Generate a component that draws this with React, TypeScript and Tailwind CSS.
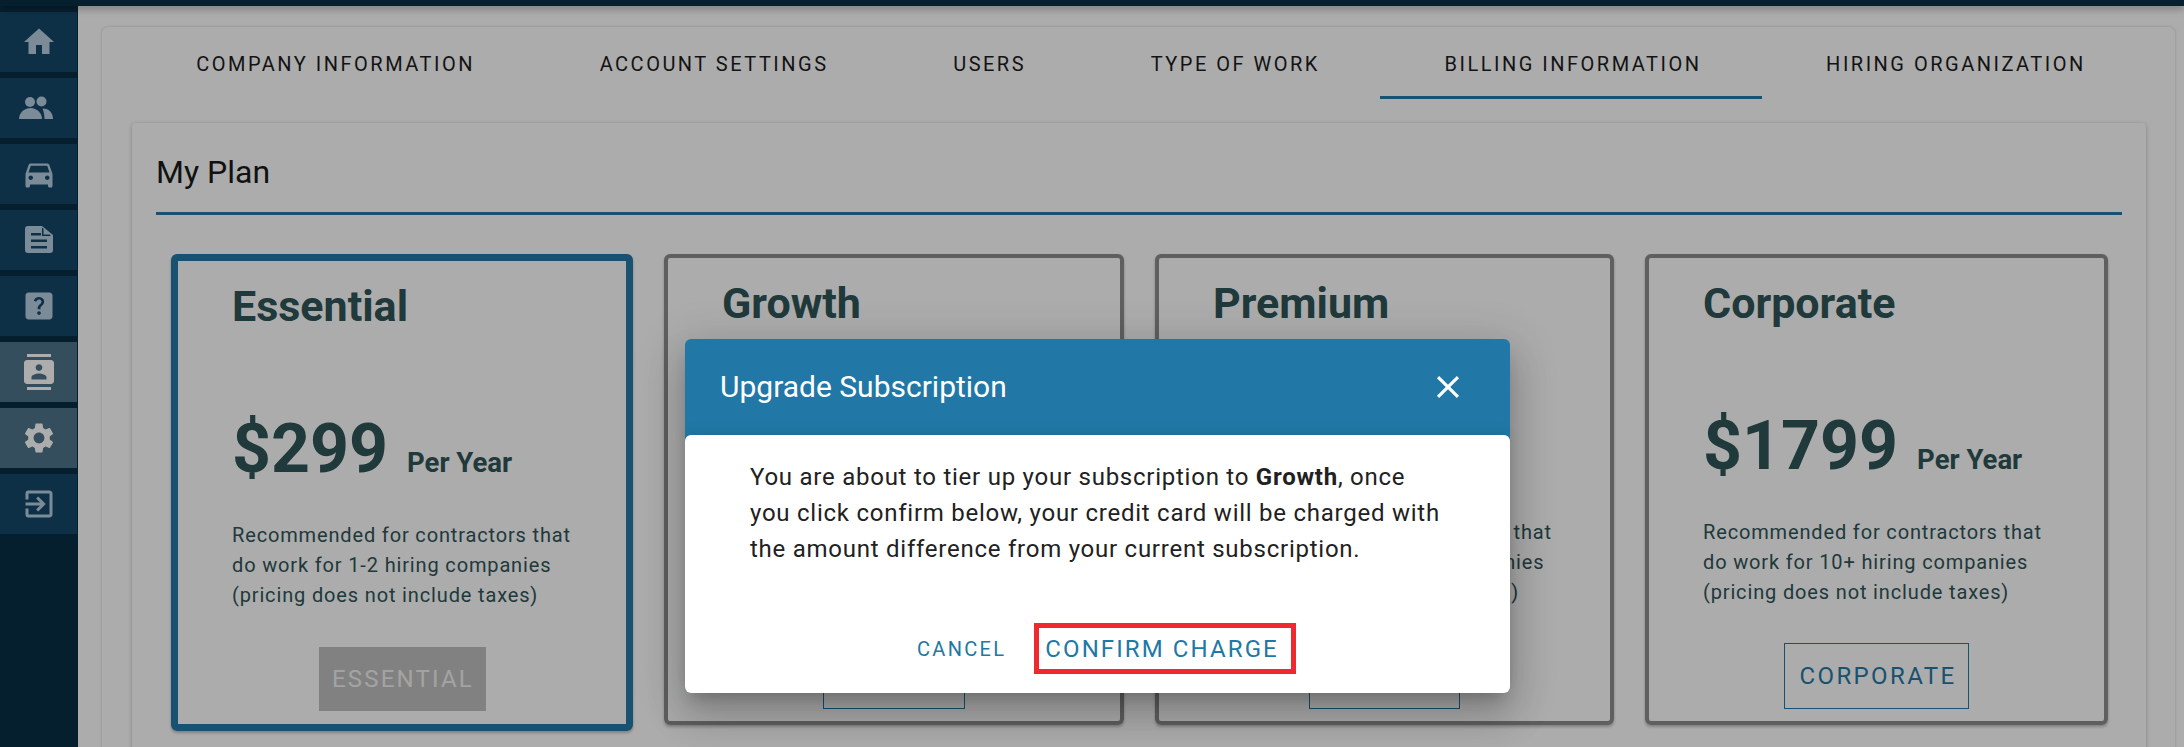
import {
  MdHome,
  MdDirectionsCar,
  MdHelpCenter,
  MdContacts,
  MdSettings,
  MdOutlineExitToApp,
  MdClose,
} from "react-icons/md";

const TABS = ["Company Information", "Account Settings", "Users", "Type of Work", "Billing Information", "Hiring Organization"];

function PeopleIcon({ className }: { className?: string }) {
  return (
    <svg viewBox="0 0 36 36" fill="currentColor" className={`overflow-visible ${className}`}>
      <circle cx="9" cy="12" r="5" />
      <circle cx="20.5" cy="11.5" r="5" />
      <path d="M-2 29c0-6 5-11 11.5-11s11.5 5 11.5 11z" />
      <path d="M21.5 18.5c5.500 0 10.500 3 10.500 10.500h-8.500c0-4-.8-7.500-2-10.500z" />
    </svg>
  );
}

function DocIcon({ className }: { className?: string }) {
  return (
    <svg viewBox="0 0 36 36" fill="currentColor" className={className}>
      <path
        fillRule="evenodd"
        d="M7 4h14l11 9v15a3 3 0 0 1-3 3H7a3 3 0 0 1-3-3V7a3 3 0 0 1 3-3zM10 11h10v2.500H10zM10 17.500h16v2.500H10zM10 24h16v2.500H10zM21 5.500v8.500h9l-1.400-1.500h-6.100V6.800z"
      />
    </svg>
  );
}

const NAV = [
  { icon: MdHome },
  { icon: PeopleIcon },
  { icon: MdDirectionsCar },
  { icon: DocIcon },
  { icon: MdHelpCenter },
  { icon: MdContacts, active: true },
  { icon: MdSettings, active: true },
  { icon: MdOutlineExitToApp },
];

const PLANS = [
  { name: "Essential", price: "$299", range: "1-2", width: "w-[462px]", current: true },
  { name: "Growth", price: "$599", range: "3-5", width: "w-[460px]" },
  { name: "Premium", price: "$999", range: "6-10", width: "w-[459px]" },
  { name: "Corporate", price: "$1799", range: "10+", width: "w-[463px]" },
];

export default function App() {
  return (
    <div className="relative flex h-[747px] w-[2184px] flex-col overflow-hidden bg-[#fefefe] font-['Roboto',sans-serif]">
      {/* Top bar */}
      <div className="z-10 h-[6px] shrink-0 bg-[#092f45] shadow-[0_2px_8px_rgba(0,0,0,0.4)]" />

      <div className="flex min-h-0 flex-1">
        {/* Sidebar */}
        <div className="flex w-[78px] shrink-0 flex-col gap-[6px] bg-[#092f45] pt-[6px]">
          {NAV.map((item, i) => (
            <div
              key={i}
              className={`flex h-[60px] w-[77px] items-center justify-center ${item.active ? "bg-[#4d748a] text-white" : "bg-[#154869] text-[#b5cee0]"}`}
            >
              <item.icon className="h-[36px] w-[36px]" />
            </div>
          ))}
        </div>

        {/* Main */}
        <div className="min-w-0 flex-1 pl-[24px] pr-[9px] pt-[21px]">
          <div className="h-[800px] rounded-t-[6px] bg-[#fefefe] px-[30px] shadow-[0_0_3px_rgba(0,0,0,0.2)]">
            {/* Tabs */}
            <div className="flex h-[72px] w-[2014px] text-[#1c1c1c]">
              {TABS.map((tab) => (
                <div
                  key={tab}
                  className={`flex flex-auto items-center justify-center border-b-[3px] pl-[42px] pr-[38px] pt-[4px] text-[20px] uppercase leading-none tracking-[2.5px] ${tab === "Billing Information" ? "border-[#2678a5]" : "border-transparent"}`}
                >
                  {tab}
                </div>
              ))}
            </div>

            {/* My Plan card */}
            <div className="mt-[24px] h-[800px] w-[2014px] rounded-[4px] px-[24px] pt-[24px] shadow-[0_1px_4px_rgba(0,0,0,0.25)]">
              <h2 className="h-[68px] border-b-[3px] border-[#2678a5] text-[32px] font-normal leading-[50px] text-[#1a1a1a]">My Plan</h2>
              <div className="mt-[39px] flex items-start gap-[31px] pl-[15px]">
                {PLANS.map((plan) => (
                  <div
                    key={plan.name}
                    className={`${plan.width} rounded-[6px] shadow-[0_2px_3px_rgba(0,0,0,0.25)] ${plan.current ? "border-[7px] border-[#2678a5] pb-[13px]" : "border-[4px] border-[#8c8c8c] pb-[12px]"}`}
                  >
                    <div className="pl-[54px] pr-[20px] pt-[15px] text-[#305458]">
                      <div className="text-[43px] font-bold leading-[60px]">{plan.name}</div>
                      <div className="mt-[71px] flex h-[84px] items-baseline">
                        <span className="text-[68px] font-bold leading-[84px]">{plan.price}</span>
                        <span className="ml-[19px] text-[27.5px] font-bold">Per Year</span>
                      </div>
                      <p className="mt-[29px] text-[20px] leading-[30px] tracking-[0.85px]">
                        Recommended for contractors that
                        <br />
                        do work for {plan.range} hiring companies
                        <br />
                        (pricing does not include taxes)
                      </p>
                    </div>
                    <div className="mt-[36px] flex justify-center">
                      {plan.current ? (
                        <button className="mt-[1px] h-[64px] w-[167px] bg-[#bfbfbf] pl-[2px] text-[24px] uppercase tracking-[2.2px] text-[#f0f0f0]">{plan.name}</button>
                      ) : (
                        <button className="h-[66px] border border-[#2678a5] pl-[14px] pr-[11px] text-[24px] uppercase tracking-[2.4px] text-[#2678a5]">{plan.name}</button>
                      )}
                    </div>
                  </div>
                ))}
              </div>
            </div>
          </div>
        </div>
      </div>

      {/* Backdrop + dialog */}
      <div className="absolute inset-0 z-20 flex bg-black/[0.32] pl-[685px] pt-[339px]">
        <div className="h-[354px] w-[825px] rounded-[6px] bg-[#2178a6] shadow-[0_11px_15px_-7px_rgba(0,0,0,0.2),0_24px_38px_3px_rgba(0,0,0,0.14),0_9px_46px_8px_rgba(0,0,0,0.12)]">
          <div className="flex h-[96px] items-center justify-between pl-[35px] pr-[43px] text-white">
            <span className="text-[30px] leading-none">Upgrade Subscription</span>
            <MdClose className="h-[38px] w-[38px]" />
          </div>
          <div className="h-[258px] rounded-[6px] bg-white pl-[65px] pt-[24px] shadow-[0_-6px_10px_rgba(0,0,0,0.06)]">
            <p className="text-[24px] leading-[36px] tracking-[0.75px] text-[#212121]">
              You are about to tier up your subscription to <b className="font-bold">Growth</b>, once
              <br />
              you click confirm below, your credit card will be charged with
              <br />
              the amount difference from your current subscription.
            </p>
            <div className="mt-[56px] flex items-center pl-[167px]">
              <button className="text-[20px] uppercase leading-none tracking-[2.3px] text-[#2178a6]">Cancel</button>
              <button className="ml-[28px] flex h-[51px] w-[262px] items-center border-[5px] border-[#ee2a2e] pl-[6px] text-[24px] uppercase leading-none tracking-[2.1px] text-[#2178a6]">
                Confirm Charge
              </button>
            </div>
          </div>
        </div>
      </div>
    </div>
  );
}
